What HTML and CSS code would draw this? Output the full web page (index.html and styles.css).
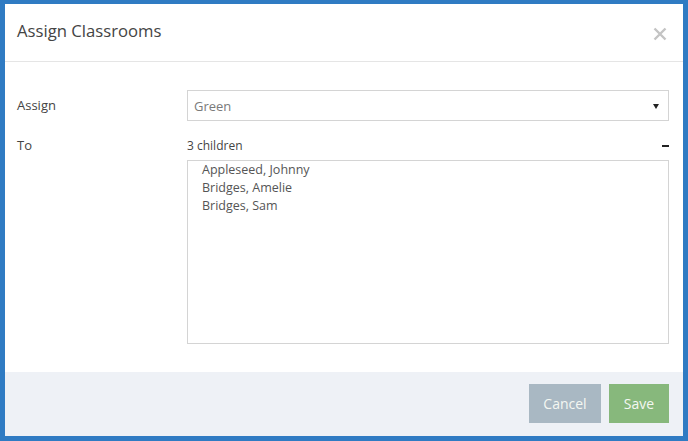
FILE: index.html
```html
<!DOCTYPE html>
<html>
<head>
<meta charset="utf-8">
<link rel="stylesheet" href="styles.css">
</head>
<body>
<div class="modal">
  <div class="modal-header">
    <h1 class="title">Assign Classrooms</h1>
    <span class="close">
      <svg width="14" height="14" viewBox="0 0 14 14"><path d="M1.5 1.5 L12.5 12.5 M12.5 1.5 L1.5 12.5" stroke="#c4c4c4" stroke-width="2.4" stroke-linecap="butt"/></svg>
    </span>
  </div>
  <div class="modal-body">
    <div class="row row-assign">
      <div class="label">Assign</div>
      <div class="control">
        <div class="select">
          <span class="select-value">Green</span>
          <svg class="caret" width="6" height="5" viewBox="0 0 6 5"><path d="M0 0 H6 L3 5 Z" fill="#222"/></svg>
        </div>
      </div>
    </div>
    <div class="row row-to">
      <div class="label">To</div>
      <div class="control">
        <div class="count-line">
          <span class="count">3 children</span>
          <span class="minus"></span>
        </div>
        <div class="list">
          <div class="item">Appleseed, Johnny</div>
          <div class="item">Bridges, Amelie</div>
          <div class="item">Bridges, Sam</div>
        </div>
      </div>
    </div>
  </div>
  <div class="modal-footer">
    <button class="btn btn-cancel">Cancel</button>
    <button class="btn btn-save">Save</button>
  </div>
</div>
</body>
</html>
```

FILE: styles.css
```css
* { box-sizing: border-box; }
html, body {
  margin: 0;
  padding: 0;
  width: 688px;
  height: 441px;
  overflow: hidden;
}
body {
  background: #2f7bc3;
  font-family: "Open Sans", "Noto Sans", sans-serif;
  color: #444;
  padding: 4px 5px 5px 5px;
}
.modal {
  background: #fff;
  height: 432px;
  display: flex;
  flex-direction: column;
}
.modal-header {
  height: 58px;
  border-bottom: 1px solid #e5e5e5;
  display: flex;
  align-items: center;
  justify-content: space-between;
  padding: 0 16px 0 12px;
}
.title {
  margin: 0;
  font-size: 16.7px;
  font-weight: 400;
  color: #444;
  position: relative;
  top: -2px;
}
.close {
  display: flex;
  position: relative;
  top: 1px;
}
.modal-body {
  flex: 1;
  padding: 28px 14px 0 12px;
}
.row {
  display: flex;
}
.label {
  width: 170px;
  font-size: 13px;
  color: #444;
}
.control {
  flex: 1;
}
.row-assign .label {
  line-height: 31px;
}
.select {
  height: 31px;
  border: 1px solid #d4d4d4;
  display: flex;
  align-items: center;
  justify-content: space-between;
  padding: 0 9px 0 6px;
}
.select-value {
  font-size: 13px;
  color: #7a7a7a;
}
.caret {
  position: relative;
  top: 1px;
}
.row-to {
  margin-top: 14px;
}
.row-to .label {
  line-height: 20px;
}
.count-line {
  display: flex;
  justify-content: space-between;
  align-items: center;
  height: 20px;
  margin-bottom: 5px;
}
.count {
  font-size: 12px;
  color: #444;
}
.minus {
  width: 7px;
  height: 2px;
  background: #222;
  position: relative;
  top: 1px;
}
.list {
  height: 184px;
  border: 1px solid #d4d4d4;
  padding: 0 14px;
}
.item {
  font-size: 12.5px;
  line-height: 18px;
  color: #555;
}
.modal-footer {
  height: 64px;
  background: #eef1f6;
  display: flex;
  justify-content: flex-end;
  align-items: flex-start;
  padding: 12px 14px 0 0;
  gap: 8px;
}
.btn {
  border: none;
  height: 39px;
  font-family: "Open Sans", "Noto Sans", sans-serif;
  font-size: 14px;
  color: #f4f7f2;
  padding: 0;
}
.btn-cancel {
  width: 72px;
  background: #a9b8c3;
}
.btn-save {
  width: 60px;
  background: #87b87c;
}
```
